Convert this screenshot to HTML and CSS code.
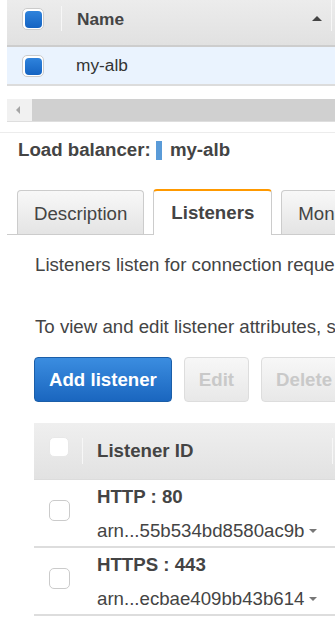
FILE: index.html
```html
<!DOCTYPE html>
<html lang="en">
<head>
    <meta charset="UTF-8">
    <meta name="viewport" content="width=device-width, initial-scale=1.0">
    <title>Load Balancers</title>
    <link rel="stylesheet" href="styles.css">
</head>
<body>
    <div class="console">
        <div class="lb-grid">
            <div class="grid-head">
                <div class="cell-check"><span class="checkbox checked"></span></div>
                <div class="col-name">Name<span class="sort-up"></span></div>
                <div class="col-rest"></div>
            </div>
            <div class="grid-row selected">
                <div class="cell-check"><span class="checkbox checked"></span></div>
                <div class="col-name">my-alb</div>
            </div>
        </div>

        <div class="h-scroll">
            <div class="scroll-left"><span class="arrow-left"></span></div>
            <div class="scroll-thumb"></div>
        </div>

        <div class="split"></div>

        <div class="details">
            <h2 class="lb-title">Load balancer: <span class="lb-mark"></span>my-alb</h2>

            <div class="tabs">
                <div class="tab">Description</div>
                <div class="tab active">Listeners</div>
                <div class="tab">Monitoring</div>
                <div class="tab">Integrated services</div>
            </div>

            <div class="tab-body">
                <p class="intro">Listeners listen for connection requests using the protocol and port you configure.</p>
                <p class="intro second">To view and edit listener attributes, select a listener.</p>

                <div class="actions">
                    <button class="btn btn-primary">Add listener</button>
                    <button class="btn" disabled>Edit</button>
                    <button class="btn" disabled>Delete</button>
                </div>

                <div class="listeners">
                    <div class="list-head">
                        <div class="list-check"><span class="checkbox"></span></div>
                        <div class="list-id">Listener ID</div>
                        <div class="list-rest"></div>
                    </div>
                    <div class="list-row">
                        <div class="list-check"><span class="checkbox"></span></div>
                        <div class="list-id">
                            <div class="proto">HTTP : 80</div>
                            <div class="arn">arn...55b534bd8580ac9b<span class="caret"></span></div>
                        </div>
                    </div>
                    <div class="list-row">
                        <div class="list-check"><span class="checkbox"></span></div>
                        <div class="list-id">
                            <div class="proto">HTTPS : 443</div>
                            <div class="arn">arn...ecbae409bb43b614<span class="caret"></span></div>
                        </div>
                    </div>
                </div>
            </div>
        </div>
    </div>
</body>
</html>
```

FILE: styles.css
```css
* {
    margin: 0;
    padding: 0;
    box-sizing: border-box;
}

html, body {
    overflow: hidden;
}

body {
    font-family: "Liberation Sans", Arial, sans-serif;
    color: #444;
    background: #fff;
}

.console {
    width: 700px;
    white-space: nowrap;
}

/* load balancer grid */
.lb-grid {
    margin-left: 7px;
    font-size: 17.3px;
}

.grid-head {
    display: flex;
    height: 47px;
    background: linear-gradient(#ececec, #e1e1e1);
    border-bottom: 2px solid #cdcdcd;
}

.grid-head .cell-check {
    align-self: flex-start;
    margin-top: 6px;
    height: 25px;
    border-right: 1px solid #f7f7f7;
}

.cell-check {
    width: 55px;
    padding-left: 15px;
    display: flex;
    align-items: center;
}

.grid-head .col-name {
    display: flex;
    align-items: flex-start;
    justify-content: space-between;
    width: 270px;
    padding: 9px 9px 0 15px;
    font-weight: bold;
    border-right: 1px solid #f7f7f7;
    height: 31px;
}

.sort-up {
    margin-top: 7px;
    border-left: 5px solid transparent;
    border-right: 5px solid transparent;
    border-bottom: 5px solid #444;
}

.grid-row {
    display: flex;
    height: 39px;
    border-bottom: 2px solid #dcdcdc;
}

.grid-row.selected {
    background: #eaf3fe;
}

.grid-row .col-name {
    padding-left: 14px;
    line-height: 37px;
    color: #333;
}

.checkbox {
    display: inline-block;
    position: relative;
    width: 21px;
    height: 21px;
    background: #fff;
    border: 1px solid #cbcbcb;
    border-radius: 5px;
}

.checkbox.checked {
    width: 22px;
    height: 22px;
}

.checkbox.checked::after {
    content: "";
    position: absolute;
    top: 2px;
    left: 2px;
    right: 1px;
    bottom: 1px;
    border-radius: 4px;
    background: linear-gradient(#2f83dc, #1463c2);
}

/* horizontal scroll bar */
.h-scroll {
    display: flex;
    margin: 13px 0 0 7px;
    height: 23px;
    border-bottom: 1px solid #dedede;
}

.scroll-left {
    width: 25px;
    background: #f1f1f1;
    display: flex;
    align-items: center;
    padding-left: 9px;
}

.arrow-left {
    border-top: 4px solid transparent;
    border-bottom: 4px solid transparent;
    border-right: 4px solid #a6a6a6;
}

.scroll-thumb {
    flex: 1;
    background: #d0d0d0;
}

.split {
    margin-top: 10px;
    border-top: 1px solid #ececec;
}

/* details pane */
.lb-title {
    margin: 6px 0 0 18px;
    font-size: 18.67px;
    font-weight: bold;
    color: #444;
}

.lb-mark {
    display: inline-block;
    width: 6px;
    height: 19px;
    margin-right: 8px;
    vertical-align: -4px;
    background: #5a9bd8;
}

.tabs {
    display: flex;
    align-items: flex-end;
    gap: 9px;
    margin: 28px 0 0 7px;
    padding-left: 10px;
    border-bottom: 1px solid #cccccc;
    font-size: 18.67px;
}

.tab {
    height: 44px;
    line-height: 45px;
    padding: 0 16px;
    border: 1px solid #cccccc;
    border-bottom: none;
    border-radius: 4px 4px 0 0;
    background: linear-gradient(#f8f8f8, #e4e4e4);
    color: #444;
}

.tab.active {
    height: 46px;
    margin-bottom: -1px;
    line-height: 44px;
    padding: 0 17px;
    border-top: 2px solid #ff9900;
    background: #fff;
    font-weight: bold;
}

.tab-body {
    padding-left: 34px;
    font-size: 18.67px;
}

.intro {
    margin-top: 19px;
    padding-left: 1px;
}

.intro.second {
    margin-top: 40px;
}

.actions {
    display: flex;
    gap: 12px;
    margin-top: 19px;
}

.btn {
    height: 45px;
    padding: 0 14px;
    font-family: inherit;
    font-size: 18.67px;
    font-weight: bold;
    color: #c9c9c9;
    border: 1px solid #dddddd;
    border-radius: 4px;
    background: linear-gradient(#f7f7f7, #e8e8e8);
}

.btn-primary {
    color: #fff;
    border-color: #1b5ea8;
    background: linear-gradient(#3b8de0, #1a66bf);
}

/* listeners table */
.listeners {
    margin-top: 21px;
}

.list-head {
    display: flex;
    align-items: center;
    height: 57px;
    background: linear-gradient(#efefef, #e2e2e2);
    border-bottom: 1px solid #dcdcdc;
    font-weight: bold;
}

.list-check {
    width: 49px;
    padding-left: 15px;
    display: flex;
}

.list-head .list-check {
    height: 26px;
    align-items: flex-start;
    padding-top: 0;
    border-right: 1px solid #f7f7f7;
}

.list-head .list-id {
    width: 250px;
    height: 26px;
    padding: 0 0 0 14px;
    line-height: 26px;
    border-right: 1px solid #f7f7f7;
}

.list-head .checkbox {
    width: 20px;
    height: 20px;
    margin-top: -1px;
    border-color: #e8e8e8;
}

.list-row {
    display: flex;
    height: 68px;
    border-bottom: 2px solid #dddddd;
}

.list-row .list-check {
    padding-top: 20px;
}

.list-row .list-id {
    padding: 5px 0 0 14px;
}

.proto {
    font-weight: bold;
    line-height: 24px;
}

.arn {
    margin-top: 10px;
    line-height: 24px;
    color: #444;
}

.caret {
    display: inline-block;
    margin-left: 5px;
    vertical-align: 4px;
    border-left: 4px solid transparent;
    border-right: 4px solid transparent;
    border-top: 4px solid #777;
}
```
